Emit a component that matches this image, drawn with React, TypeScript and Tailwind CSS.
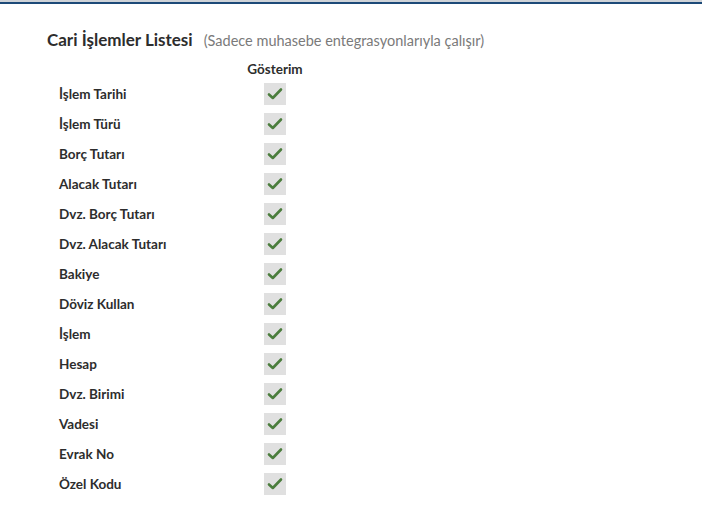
const fields = [
  "İşlem Tarihi",
  "İşlem Türü",
  "Borç Tutarı",
  "Alacak Tutarı",
  "Dvz. Borç Tutarı",
  "Dvz. Alacak Tutarı",
  "Bakiye",
  "Döviz Kullan",
  "İşlem",
  "Hesap",
  "Dvz. Birimi",
  "Vadesi",
  "Evrak No",
  "Özel Kodu",
];

function CheckCell() {
  return (
    <div className="flex h-[22px] w-[22px] items-center justify-center bg-[#e0e0e0]">
      <svg width="16" height="14" viewBox="0 0 16 14" fill="none">
        <path
          d="M2 7.5 L5.8 11 L14 2.5"
          stroke="#4b7d3d"
          strokeWidth="2.6"
          strokeLinecap="round"
          strokeLinejoin="round"
        />
      </svg>
    </div>
  );
}

export default function App() {
  return (
    <div className="min-h-[512px] w-[702px] bg-white font-['Lato','Open_Sans',sans-serif] text-[#333]">
      <div className="h-[2px] bg-[#cfd3d8]" />
      <div className="h-[2px] bg-[#1d4a78]" />

      <div className="pl-[47px] pt-[23px]">
        <div className="flex items-baseline gap-[11px]">
          <h2 className="text-[17px] font-bold text-[#2d2d2d]">Cari İşlemler Listesi</h2>
          <span className="text-[14.5px] text-[#7a7a7a]">
            (Sadece muhasebe entegrasyonlarıyla çalışır)
          </span>
        </div>

        <div className="mt-[6px] pl-[12px]">
          <div className="grid grid-cols-[186px_60px] items-center">
            <div />
            <div className="text-center text-[13.5px] font-bold text-[#2d2d2d]">Gösterim</div>
          </div>
          <div>
            {fields.map((f) => (
              <div key={f} className="grid h-[30px] grid-cols-[186px_60px] items-center">
                <span className="text-[13.5px] font-bold text-[#2d2d2d]">{f}</span>
                <div className="flex justify-center">
                  <CheckCell />
                </div>
              </div>
            ))}
          </div>
        </div>
      </div>
    </div>
  );
}
